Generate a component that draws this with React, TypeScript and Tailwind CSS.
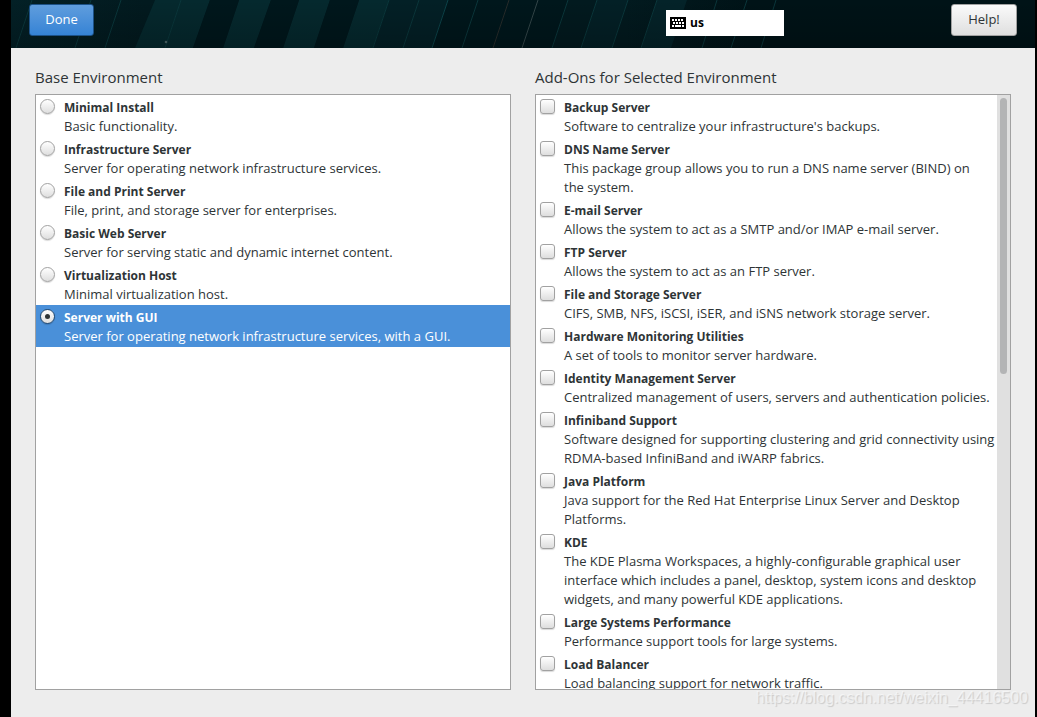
import { useState } from "react";

type Option = { title: string; text: string };

const environments: Option[] = [
  { title: "Minimal Install", text: "Basic functionality." },
  { title: "Infrastructure Server", text: "Server for operating network infrastructure services." },
  { title: "File and Print Server", text: "File, print, and storage server for enterprises." },
  { title: "Basic Web Server", text: "Server for serving static and dynamic internet content." },
  { title: "Virtualization Host", text: "Minimal virtualization host." },
  { title: "Server with GUI", text: "Server for operating network infrastructure services, with a GUI." },
];

const addOns: Option[] = [
  { title: "Backup Server", text: "Software to centralize your infrastructure's backups." },
  { title: "DNS Name Server", text: "This package group allows you to run a DNS name server (BIND) on\nthe system." },
  { title: "E-mail Server", text: "Allows the system to act as a SMTP and/or IMAP e-mail server." },
  { title: "FTP Server", text: "Allows the system to act as an FTP server." },
  { title: "File and Storage Server", text: "CIFS, SMB, NFS, iSCSI, iSER, and iSNS network storage server." },
  { title: "Hardware Monitoring Utilities", text: "A set of tools to monitor server hardware." },
  { title: "Identity Management Server", text: "Centralized management of users, servers and authentication policies." },
  { title: "Infiniband Support", text: "Software designed for supporting clustering and grid connectivity using\nRDMA-based InfiniBand and iWARP fabrics." },
  { title: "Java Platform", text: "Java support for the Red Hat Enterprise Linux Server and Desktop\nPlatforms." },
  { title: "KDE", text: "The KDE Plasma Workspaces, a highly-configurable graphical user\ninterface which includes a panel, desktop, system icons and desktop\nwidgets, and many powerful KDE applications." },
  { title: "Large Systems Performance", text: "Performance support tools for large systems." },
  { title: "Load Balancer", text: "Load balancing support for network traffic." },
];

function Stripes() {
  return (
    <svg className="absolute inset-0 h-full w-full" viewBox="0 0 1024 48" preserveAspectRatio="xMinYMin slice" aria-hidden="true">
      <defs>
        <linearGradient id="base" x1="0" x2="1" y1="0" y2="0">
          <stop offset="0" stopColor="#032026" />
          <stop offset="0.13" stopColor="#021a1f" />
          <stop offset="0.6" stopColor="#021a1f" />
          <stop offset="0.72" stopColor="#001317" />
        </linearGradient>
        <linearGradient id="shade" x1="0" x2="0" y1="0" y2="1">
          <stop offset="0" stopColor="#000" stopOpacity="0" />
          <stop offset="1" stopColor="#000" stopOpacity="0.2" />
        </linearGradient>
      </defs>
      <rect width="1024" height="48" fill="url(#base)" />
      <path d="M144 0H199L182 48H124Z M228 0H260L243 48H212Z M288 0H319L303 48H272Z M348 0H378L362 48H332Z" fill="#05292e" />
      <path d="M378 0H408L392 48H362Z M408 0H437L421 48H392Z M586 0H617L601 48H570Z" fill="#032026" />
      <path d="M646 0H676L660 48H630Z" fill="#042329" />
      <path d="M199 0H228L212 48H182Z M260 0H288L272 48H243Z M319 0H348L332 48H303Z M437 0H557L541 48H421Z" fill="#00171c" />
      <path d="M21 0L5 48M80 0L64 48M110 0L94 48M170 0L154 48M378 0L362 48M408 0L392 48M467 0L451 48M557 0L541 48M586 0L570 48M617 0L601 48M646 0L630 48M706 0L691 48M736 0L720 48M765 0L750 48" stroke="#0a363b" fill="none" />
      <path d="M437 0L421 48" stroke="#0b4248" fill="none" />
      <path d="M498 0L482 48" stroke="#262c2a" fill="none" />
      <path d="M527 0L511 48" stroke="#324548" fill="none" />
      <circle cx="155" cy="42" r="1.3" fill="#4b6668" />
      <rect width="1024" height="48" fill="url(#shade)" />
    </svg>
  );
}

function KeyboardIcon() {
  return (
    <svg width="16" height="12" viewBox="0 0 16 12" shapeRendering="crispEdges" aria-hidden="true">
      <rect width="16" height="12" rx="1" fill="#000" />
      <path d="M2 2h2v2H2zM5 2h2v2H5zM8 2h2v2H8zM11 2h2v2h-2zM3 5h2v2H3zM6 5h2v2H6zM9 5h2v2H9zM12 5h2v2h-2zM2 8h2v2H2zM5 8h6v2H5zM12 8h2v2h-2z" fill="#fff" />
    </svg>
  );
}

type RowProps = {
  option: Option;
  kind: "radio" | "checkbox";
  checked: boolean;
  onChange: () => void;
};

function Row({ option, kind, checked, onChange }: RowProps) {
  const highlighted = kind === "radio" && checked;
  return (
    <li>
      <label className={`flex gap-2 pt-[3px] pb-px pl-1 ${highlighted ? "bg-[#4a90d9] text-white" : ""}`}>
        <span className="grid h-4 w-4 shrink-0 place-items-start pt-px">
          <input
            type={kind}
            name={kind === "radio" ? "environment" : option.title}
            checked={checked}
            onChange={onChange}
            className={`col-start-1 row-start-1 size-[15px] appearance-none border bg-linear-to-b from-white to-[#dedede] shadow-[0_1px_1px_rgba(0,0,0,0.15)] ${
              kind === "radio" ? "rounded-full" : "rounded-[3px]"
            } ${highlighted ? "border-[#24496f]" : "border-[#a1a1a1]"}`}
          />
          {checked && kind === "radio" && (
            <span className="pointer-events-none z-10 col-start-1 row-start-1 m-[5px] size-[5px] rounded-full bg-[#2e3436]" />
          )}
          {checked && kind === "checkbox" && (
            <svg className="pointer-events-none col-start-1 row-start-1 size-[15px]" viewBox="0 0 15 15" aria-hidden="true">
              <path d="M4 7l3 3 4-6" fill="none" stroke="#2e3436" strokeWidth="2" />
            </svg>
          )}
        </span>
        <span className="min-w-0 text-[13px] leading-[19px]">
          <span className="block text-[12px] font-bold">{option.title}</span>
          <span className="block whitespace-pre">{option.text}</span>
        </span>
      </label>
    </li>
  );
}

export default function App() {
  const [environment, setEnvironment] = useState("Server with GUI");
  const [selected, setSelected] = useState<string[]>([]);

  const toggle = (title: string) =>
    setSelected((current) => (current.includes(title) ? current.filter((t) => t !== title) : [...current, title]));

  return (
    <div className="relative flex h-screen flex-col border-r-2 border-l-[11px] border-black bg-[#ededed] font-['Open_Sans',sans-serif] text-[#2e3436]">
      <header className="relative h-12 shrink-0 overflow-hidden bg-[#001418]">
        <Stripes />
        <div className="relative flex items-start pt-1 pr-[18px] pl-[18px]">
          <button type="button" className="h-8 w-[65px] rounded-[3px] border border-[#1c5187] bg-linear-to-b from-[#5f9ddd] to-[#3583d5] text-[13px] text-white">
            Done
          </button>
          <div className="mt-1.5 mr-[167px] ml-auto flex h-[26px] w-[118px] items-center gap-1 bg-white pl-1 text-[12px] font-bold text-black">
            <KeyboardIcon />
            <span>us</span>
          </div>
          <button type="button" className="h-8 w-[66px] rounded-[3px] border border-[#a1a1a1] bg-linear-to-b from-[#fafafa] to-[#dfdfdf] text-[13px]">
            Help!
          </button>
        </div>
      </header>

      <main className="grid min-h-0 flex-1 grid-cols-2 gap-6 px-6 pt-[18px] pb-[27px]">
        <section className="flex min-h-0 flex-col gap-[5px]">
          <h2 className="text-[15px] leading-[23px]">Base Environment</h2>
          <ul className="min-h-0 flex-1 overflow-hidden border border-[#a1a1a1] bg-white">
            {environments.map((option) => (
              <Row
                key={option.title}
                option={option}
                kind="radio"
                checked={environment === option.title}
                onChange={() => setEnvironment(option.title)}
              />
            ))}
          </ul>
        </section>

        <section className="flex min-h-0 flex-col gap-[5px]">
          <h2 className="text-[15px] leading-[23px]">Add-Ons for Selected Environment</h2>
          <div className="flex min-h-0 flex-1 border border-[#a1a1a1] bg-white">
            <ul className="min-w-0 flex-1 overflow-x-hidden overflow-y-auto [scrollbar-width:none]">
              {addOns.map((option) => (
                <Row
                  key={option.title}
                  option={option}
                  kind="checkbox"
                  checked={selected.includes(option.title)}
                  onChange={() => toggle(option.title)}
                />
              ))}
            </ul>
            <div className="w-[13px] shrink-0 bg-[#e0e0e0] px-[3px] py-[3px]">
              <div className="h-[47%] rounded-full bg-[#b3b4b5]" />
            </div>
          </div>
        </section>
      </main>

      <p className="pointer-events-none absolute right-[7px] bottom-[9px] font-['Liberation_Sans',sans-serif] text-[16px] leading-5 text-white/50 [text-shadow:1px_1px_1px_rgba(0,0,0,0.15)]">
        https://blog.csdn.net/weixin_44416500
      </p>
    </div>
  );
}
